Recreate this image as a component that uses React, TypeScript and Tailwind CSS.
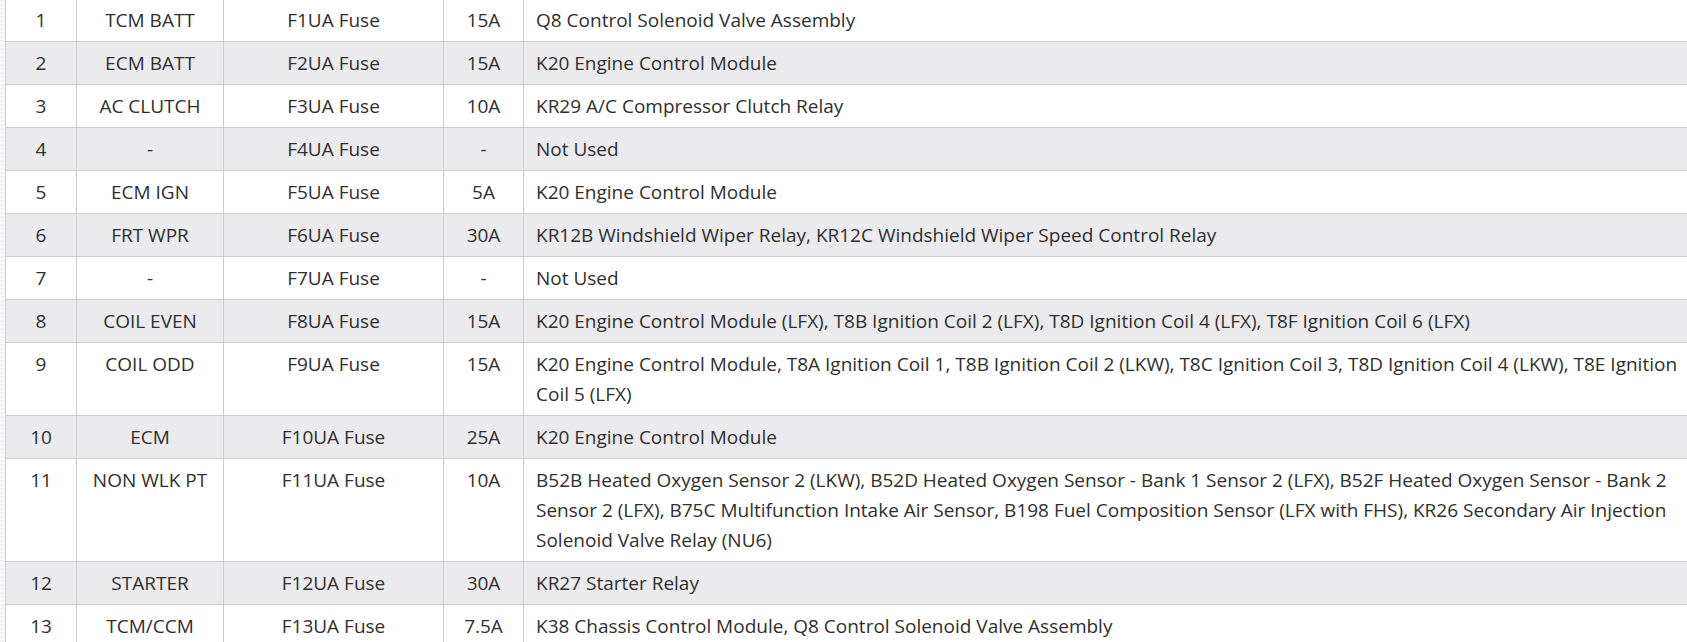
type FuseRow = {
  no: number;
  name: string;
  fuse: string;
  amps: string;
  circuit: string;
};

const rows: FuseRow[] = [
  { no: 1, name: "TCM BATT", fuse: "F1UA Fuse", amps: "15A", circuit: "Q8 Control Solenoid Valve Assembly" },
  { no: 2, name: "ECM BATT", fuse: "F2UA Fuse", amps: "15A", circuit: "K20 Engine Control Module" },
  { no: 3, name: "AC CLUTCH", fuse: "F3UA Fuse", amps: "10A", circuit: "KR29 A/C Compressor Clutch Relay" },
  { no: 4, name: "-", fuse: "F4UA Fuse", amps: "-", circuit: "Not Used" },
  { no: 5, name: "ECM IGN", fuse: "F5UA Fuse", amps: "5A", circuit: "K20 Engine Control Module" },
  { no: 6, name: "FRT WPR", fuse: "F6UA Fuse", amps: "30A", circuit: "KR12B Windshield Wiper Relay, KR12C Windshield Wiper Speed Control Relay" },
  { no: 7, name: "-", fuse: "F7UA Fuse", amps: "-", circuit: "Not Used" },
  {
    no: 8,
    name: "COIL EVEN",
    fuse: "F8UA Fuse",
    amps: "15A",
    circuit: "K20 Engine Control Module (LFX), T8B Ignition Coil 2 (LFX), T8D Ignition Coil 4 (LFX), T8F Ignition Coil 6 (LFX)",
  },
  {
    no: 9,
    name: "COIL ODD",
    fuse: "F9UA Fuse",
    amps: "15A",
    circuit:
      "K20 Engine Control Module, T8A Ignition Coil 1, T8B Ignition Coil 2 (LKW), T8C Ignition Coil 3, T8D Ignition Coil 4 (LKW), T8E Ignition Coil 5 (LFX)",
  },
  { no: 10, name: "ECM", fuse: "F10UA Fuse", amps: "25A", circuit: "K20 Engine Control Module" },
  {
    no: 11,
    name: "NON WLK PT",
    fuse: "F11UA Fuse",
    amps: "10A",
    circuit:
      "B52B Heated Oxygen Sensor 2 (LKW), B52D Heated Oxygen Sensor - Bank 1 Sensor 2 (LFX), B52F Heated Oxygen Sensor - Bank 2 Sensor 2 (LFX), B75C Multifunction Intake Air Sensor, B198 Fuel Composition Sensor (LFX with FHS), KR26 Secondary Air Injection Solenoid Valve Relay (NU6)",
  },
  { no: 12, name: "STARTER", fuse: "F12UA Fuse", amps: "30A", circuit: "KR27 Starter Relay" },
  { no: 13, name: "TCM/CCM", fuse: "F13UA Fuse", amps: "7.5A", circuit: "K38 Chassis Control Module, Q8 Control Solenoid Valve Assembly" },
];

export default function App() {
  return (
    <div className="flex w-[1687px] h-[642px] overflow-hidden bg-white font-['Open_Sans',sans-serif] text-[19px] leading-[30px] text-[#2f2f2f]">
      {/* textured page edge */}
      <div className="w-[5px] shrink-0 bg-[repeating-linear-gradient(0deg,#f3f3f3_0px,#f3f3f3_2px,#fafafa_2px,#fafafa_4px)]" />

      <table className="-mt-[2px] w-[1682px] table-fixed border-collapse self-start">
        <colgroup>
          <col className="w-[71px]" />
          <col className="w-[147px]" />
          <col className="w-[220px]" />
          <col className="w-[80px]" />
          <col />
        </colgroup>
        <tbody>
          {rows.map((r) => (
            <tr key={r.no} className={r.no % 2 === 0 ? "bg-[#ebebed]" : "bg-white"}>
              <td className="border border-[#cccccc] px-2 py-[6px] text-center align-top">{r.no}</td>
              <td className="border border-[#cccccc] px-2 py-[6px] text-center align-top">{r.name}</td>
              <td className="border border-[#cccccc] px-2 py-[6px] text-center align-top">{r.fuse}</td>
              <td className="border border-[#cccccc] px-2 py-[6px] text-center align-top">{r.amps}</td>
              <td className="border border-r-0 border-[#cccccc] pl-[12px] pr-[4px] py-[6px] text-left align-top">{r.circuit}</td>
            </tr>
          ))}
        </tbody>
      </table>
    </div>
  );
}
